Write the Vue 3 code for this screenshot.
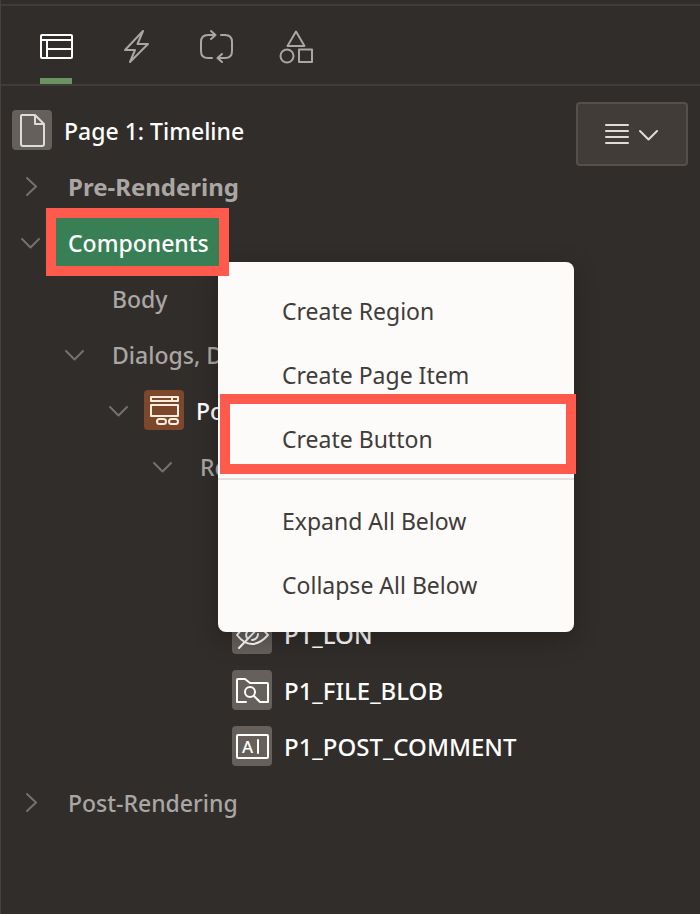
<script setup>
import { ref } from 'vue'

const tabs = [
  { id: 'rendering', label: 'Rendering' },
  { id: 'dynamic', label: 'Dynamic Actions' },
  { id: 'processing', label: 'Processing' },
  { id: 'shared', label: 'Page Shared Components' }
]
const activeTab = ref('rendering')

const rows = [
  { text: 'Page 1: Timeline', depth: -1, icon: 'page', tone: 'bright' },
  { text: 'Pre-Rendering', depth: 0, chevron: 'right', tone: 'strong' },
  { text: 'Components', depth: 0, chevron: 'down', tone: 'selected' },
  { text: 'Body', depth: 1 },
  { text: 'Dialogs, D', depth: 1, chevron: 'down' },
  { text: 'Po', depth: 2, chevron: 'down', icon: 'region', tone: 'bright' },
  { text: 'Re', depth: 3, chevron: 'down' },
  { text: '', depth: 4 },
  { text: '', depth: 4 },
  { text: 'P1_LON', depth: 4, icon: 'hidden', tone: 'item' },
  { text: 'P1_FILE_BLOB', depth: 4, icon: 'file', tone: 'item' },
  { text: 'P1_POST_COMMENT', depth: 4, icon: 'text', tone: 'item' },
  { text: 'Post-Rendering', depth: 0, chevron: 'right' }
]

const createItems = ['Create Region', 'Create Page Item', 'Create Button']
const treeItems = ['Expand All Below', 'Collapse All Below']
</script>

<template>
  <main class="panel">
    <nav class="tabs">
      <button
        v-for="tab in tabs"
        :key="tab.id"
        type="button"
        class="tab"
        :class="{ active: activeTab === tab.id }"
        :aria-label="tab.label"
        @click="activeTab = tab.id"
      >
        <svg v-if="tab.id === 'rendering'" class="tab-icon" viewBox="0 0 36 36">
          <rect x="3" y="6" width="31" height="23" rx="1" />
          <path d="M3 11H34M9 11V29M9 20H34" />
        </svg>
        <svg v-else-if="tab.id === 'dynamic'" class="tab-icon" viewBox="0 0 36 36">
          <path d="M25 2L7 21H17L12 33L30 15H19.500Z" />
        </svg>
        <svg v-else-if="tab.id === 'processing'" class="tab-icon" viewBox="0 0 36 36">
          <path d="M14 29H10Q3 29 3 22V13Q3 6 10 6H17M13 2L17.500 6L13 10" />
          <path d="M23 6H27Q34 6 34 13V22Q34 29 27 29H20M24 25L19.500 29L24 33" />
        </svg>
        <svg v-else class="tab-icon" viewBox="0 0 36 36">
          <path d="M18 2.500L26.500 17H9.500Z" />
          <circle cx="9" cy="27" r="6.500" />
          <rect x="21" y="20.500" width="13" height="12.500" />
        </svg>
      </button>
    </nav>

    <section class="workspace">
      <ul class="tree">
        <li
          v-for="(row, i) in rows"
          :key="i"
          class="row"
          :style="{ paddingLeft: 12 + 44 * Math.max(row.depth, 0) + 'px' }"
        >
          <span v-if="row.depth >= 0" class="toggle">
            <svg v-if="row.chevron === 'right'" class="chevron" viewBox="0 0 20 20">
              <path d="M6 2L15 10.500L6 19" />
            </svg>
            <svg v-else-if="row.chevron === 'down'" class="chevron" viewBox="0 0 20 20">
              <path d="M1 7L9.500 15.500L18 7" />
            </svg>
          </span>
          <span v-if="row.icon" class="badge" :class="row.icon">
            <svg v-if="row.icon === 'page'" viewBox="0 0 40 40">
              <path d="M10 5H23L32 14V34Q32 36 30 36H11Q9 36 9 34V6Q9 5 10 5ZM23 5V14H32" />
            </svg>
            <svg v-else-if="row.icon === 'region'" viewBox="0 0 40 40">
              <rect x="7" y="7" width="27" height="4" />
              <path d="M28 7V11" />
              <rect x="7" y="15" width="27" height="11" />
              <rect x="13" y="29" width="9" height="5" rx="2.500" />
              <rect x="25" y="29" width="9" height="5" rx="2.500" />
            </svg>
            <svg v-else-if="row.icon === 'hidden'" viewBox="0 0 40 40">
              <path d="M5 21Q12 11 20 11Q28 11 36 21Q28 30 20 30Q12 30 5 21Z" />
              <path d="M20 15A6 6 0 0 0 15 24M26 20A6 6 0 0 1 20 26M7 34L32 8" />
            </svg>
            <svg v-else-if="row.icon === 'file'" viewBox="0 0 40 40">
              <path d="M14 32H5V10Q5 9 6 9H13L18 13H35Q36 13 36 14V32H28L22 26" />
              <circle cx="18" cy="22" r="5" />
            </svg>
            <svg v-else viewBox="0 0 40 40">
              <rect x="5" y="9" width="31" height="23" rx="1" />
              <path d="M26 14V27" />
              <text x="10" y="27">A</text>
            </svg>
          </span>
          <span v-if="row.text" class="label" :class="row.tone">{{ row.text }}</span>
        </li>
      </ul>

      <button type="button" class="options" aria-label="Menu">
        <svg class="lines" viewBox="0 0 24 24">
          <path d="M1 3H23M1 9H23M1 15H23M1 21H23" />
        </svg>
        <svg class="caret" viewBox="0 0 20 20">
          <path d="M1 7L9.500 15.500L18 7" />
        </svg>
      </button>

      <div class="context-menu" role="menu">
        <button
          v-for="item in createItems"
          :key="item"
          type="button"
          role="menuitem"
          class="menu-item"
          :class="{ marked: item === 'Create Button' }"
        >{{ item }}</button>
        <hr class="separator" />
        <button v-for="item in treeItems" :key="item" type="button" role="menuitem" class="menu-item">{{ item }}</button>
      </div>
    </section>
  </main>
</template>

<style>
body {
  background: #312d2a;
}
</style>

<style scoped>
.panel {
  box-sizing: border-box;
  min-height: 100vh;
  padding-top: 4px;
  border-left: 1px solid #45413e;
  background: #312d2a;
  color: #a9a6a4;
  font-family: "Noto Sans", "Open Sans", sans-serif;
  font-size: 23px;
  line-height: 32px;
}

button {
  border: 0;
  padding: 0;
  background: none;
  color: inherit;
  font: inherit;
  cursor: pointer;
}

svg {
  fill: none;
  stroke: currentColor;
  stroke-width: 2;
  stroke-linecap: round;
  stroke-linejoin: round;
}

.tabs {
  display: flex;
  height: 78px;
  padding-left: 15px;
  border-top: 2px solid #403c39;
  border-bottom: 2px solid #403c39;
}

.tab {
  position: relative;
  display: flex;
  justify-content: center;
  align-items: center;
  width: 80px;
  padding-top: 4px;
}

.tab.active {
  color: #fff;
}

.tab.active::after {
  content: "";
  position: absolute;
  bottom: 0;
  left: 24px;
  width: 32px;
  height: 6px;
  background: #6b9362;
}

.tab-icon {
  width: 36px;
  height: 36px;
}

.workspace {
  position: relative;
  display: flex;
  align-items: flex-start;
  padding: 16px 12px 0 0;
}

.tree {
  flex: 1;
  margin: 0;
  padding: 0;
  list-style: none;
}

.row {
  display: flex;
  align-items: center;
  height: 56px;
  margin-left: -1px;
  white-space: nowrap;
}

.toggle {
  display: flex;
  justify-content: center;
  flex: none;
  width: 38px;
  margin-right: 6px;
  color: #75716f;
}

.chevron,
.caret {
  width: 20px;
  height: 20px;
}

.badge {
  flex: none;
  width: 40px;
  height: 40px;
  border-radius: 4px;
  background: #65605c;
  color: #fff;
}

.badge svg {
  display: block;
}

.badge.page {
  color: #dedcda;
}

.badge.region {
  background: #7d472c;
  color: #fbeedd;
}

.badge text {
  fill: currentColor;
  stroke: none;
  font-size: 17px;
  font-weight: 500;
}

.label {
  padding: 9px 10px 7px 12px;
  font-weight: 500;
}

.label.bright,
.label.item {
  color: #fff;
}

.label.item,
.label.strong {
  font-size: 24px;
}

.label.strong {
  font-weight: 700;
}

.label.selected {
  position: relative;
  z-index: 3;
  background: #387f56;
  color: #fff;
}

.label.selected::after {
  content: "";
  position: absolute;
  inset: -10px;
  border: 10px solid #ff5a4b;
}

.options {
  display: flex;
  justify-content: center;
  align-items: center;
  gap: 10px;
  width: 112px;
  height: 64px;
  border: 2px solid #55504c;
  border-radius: 4px;
  background: #413c38;
  color: #dedcda;
}

.lines {
  width: 24px;
  height: 24px;
}

.context-menu {
  position: absolute;
  z-index: 2;
  top: 176px;
  left: 217px;
  width: 356px;
  padding: 16px 0;
  box-sizing: border-box;
  border-radius: 8px;
  background: #fcfbfa;
  color: #403c39;
  box-shadow: 0 8px 24px rgba(0, 0, 0, 0.25);
}

.menu-item {
  position: relative;
  display: block;
  width: 100%;
  height: 64px;
  padding: 2px 0 0 64px;
  text-align: left;
}

.menu-item.marked::after {
  content: "";
  position: absolute;
  inset: -12px -2px -4px 2px;
  border: 10px solid #ff5a4b;
}

.separator {
  height: 2px;
  margin: 8px 0;
  border: 0;
  background: #e4e1dd;
}
</style>
